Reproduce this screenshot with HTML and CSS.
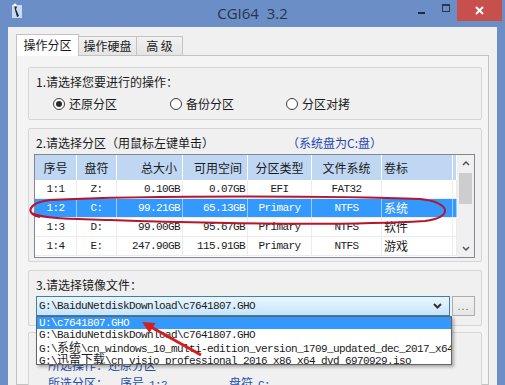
FILE: index.html
```html
<!DOCTYPE html>
<html lang="zh-CN">
<head>
    <meta charset="UTF-8">
    <title>CGI64 3.2</title>
    <link rel="stylesheet" href="styles.css">
</head>
<body>
    <div class="window">
        <header class="titlebar">
            <svg class="app-icon" width="10" height="16" viewBox="0 0 10 16">
                <rect x="0" y="2" width="10" height="13" fill="#c9dbf2"/>
                <path d="M2 1 L5 4 L4 6 L7 13 L5 14 L3 7 Z" fill="#1b2233"/>
                <circle cx="3" cy="2" r="1.6" fill="#fff"/>
            </svg>
            <div class="title">CGI64  3.2</div>
            <div class="controls">
                <div class="ctl ctl-min"><span class="min-bar"></span></div>
                <div class="ctl ctl-max"><span class="max-box"></span></div>
                <div class="ctl ctl-close">
                    <svg width="9" height="9" viewBox="0 0 9 9">
                        <path d="M1 1 L8 8 M8 1 L1 8" stroke="#fff" stroke-width="2"/>
                    </svg>
                </div>
            </div>
        </header>

        <div class="client">
            <div class="tabs">
                <div class="tab active tab-1">操作分区</div>
                <div class="tab tab-2">操作硬盘</div>
                <div class="tab tab-3">高 级</div>
            </div>

            <div class="page">
                <!-- 1. operation -->
                <section class="group group-op">
                    <div class="group-label">1.请选择您要进行的操作：</div>
                    <div class="radios">
                        <label class="radio"><span class="dot checked"></span>还原分区</label>
                        <label class="radio"><span class="dot"></span>备份分区</label>
                        <label class="radio"><span class="dot"></span>分区对拷</label>
                    </div>
                </section>

                <!-- 2. partition list -->
                <section class="group group-part">
                    <div class="group-label label-row">
                        <span class="label-main">2.请选择分区（用鼠标左键单击）</span>
                        <span class="label-note">（系统盘为C:盘）</span>
                    </div>
                    <div class="listview">
                        <div class="lv-body">
                            <div class="lv-head">
                                <div class="c">序号</div>
                                <div class="c">盘符</div>
                                <div class="r">总大小</div>
                                <div class="r">可用空间</div>
                                <div class="c">分区类型</div>
                                <div class="c">文件系统</div>
                                <div class="l">卷标</div>
                                <div></div>
                            </div>
                            <div class="lv-row mono">
                                <div class="c">1:1</div>
                                <div class="c">Z:</div>
                                <div class="r">0.10GB</div>
                                <div class="r">0.07GB</div>
                                <div class="c">EFI</div>
                                <div class="c">FAT32</div>
                                <div class="l"></div>
                                <div></div>
                            </div>
                            <div class="lv-row mono selected">
                                <div class="c">1:2</div>
                                <div class="c">C:</div>
                                <div class="r">99.21GB</div>
                                <div class="r">65.13GB</div>
                                <div class="c">Primary</div>
                                <div class="c">NTFS</div>
                                <div class="l cjk">系统</div>
                                <div></div>
                            </div>
                            <div class="lv-row mono">
                                <div class="c">1:3</div>
                                <div class="c">D:</div>
                                <div class="r">99.00GB</div>
                                <div class="r">95.67GB</div>
                                <div class="c">Primary</div>
                                <div class="c">NTFS</div>
                                <div class="l cjk">软件</div>
                                <div></div>
                            </div>
                            <div class="lv-row mono">
                                <div class="c">1:4</div>
                                <div class="c">E:</div>
                                <div class="r">247.90GB</div>
                                <div class="r">115.91GB</div>
                                <div class="c">Primary</div>
                                <div class="c">NTFS</div>
                                <div class="l cjk">游戏</div>
                                <div></div>
                            </div>
                        </div>
                        <div class="vscroll">
                            <div class="sb-btn">
                                <svg width="8" height="5" viewBox="0 0 8 5"><path d="M1 4 L4 1 L7 4" stroke="#555" stroke-width="1.5" fill="none"/></svg>
                            </div>
                            <div class="sb-track"><div class="sb-thumb"></div></div>
                            <div class="sb-btn">
                                <svg width="8" height="5" viewBox="0 0 8 5"><path d="M1 1 L4 4 L7 1" stroke="#555" stroke-width="1.5" fill="none"/></svg>
                            </div>
                        </div>
                    </div>
                </section>

                <!-- 3. image file -->
                <section class="group group-img">
                    <div class="group-label">3.请选择镜像文件：</div>
                    <div class="combo-row">
                        <div class="combo-wrap">
                            <div class="combo mono">
                                <span>G:\BaiduNetdiskDownload\c7641807.GHO</span>
                                <svg class="combo-arrow" width="9" height="6" viewBox="0 0 9 6"><path d="M1 1 L4.5 4.5 L8 1" stroke="#333" stroke-width="2" fill="none"/></svg>
                            </div>
                            <ul class="dropdown mono">
                                <li class="hot">U:\c7641807.GHO</li>
                                <li>G:\BaiduNetdiskDownload\c7641807.GHO</li>
                                <li>G:\<span class="cjk">系统</span>\cn_windows_10_multi-edition_version_1709_updated_dec_2017_x64_dvd_100406711.iso</li>
                                <li>G:\<span class="cjk">迅雷下载</span>\cn_visio_professional_2016_x86_x64_dvd_6970929.iso</li>
                            </ul>
                        </div>
                        <button class="browse">...</button>
                    </div>
                </section>

                <!-- 4. summary -->
                <section class="group group-sum">
                    <div class="sum-line">所选操作：还原分区</div>
                    <div class="sum-line">
                        <span>所选分区：</span><span class="gap-a">序号</span><span class="mono num">1:2</span><span class="gap-b">盘符</span><span class="mono num">C:</span>
                    </div>
                </section>
            </div>
        </div>

        <!-- hand drawn marks over the screenshot -->
        <svg class="marks" width="505" height="385" viewBox="0 0 505 385">
            <path d="M40 217 C25 214 27 203 50 200 C150 195 350 196 420 199 C452 202 453 218 425 221 C340 226 200 223 110 220 C70 219 45 219 31 213"
                  fill="none" stroke="#b8142c" stroke-width="2"/>
            <line x1="201" y1="355" x2="151" y2="327" stroke="#d41f1f" stroke-width="3"/>
            <polygon points="142,322 155.5,323 149.5,333" fill="#d41f1f"/>
        </svg>
    </div>
</body>
</html>
```

FILE: styles.css
```css
* {
    margin: 0;
    padding: 0;
    box-sizing: border-box;
}

body {
    font-family: "Noto Sans CJK SC", "Noto Sans", sans-serif;
    font-size: 12px;
    color: #1a1a1a;
    background: #6b8ec6;
    overflow: hidden;
}

.window {
    position: relative;
    width: 505px;
    height: 385px;
    background: #6b8ec6;
    overflow: hidden;
}

/* title bar */
.titlebar {
    height: 27px;
    display: grid;
    grid-template-columns: 1fr auto 1fr;
}

.app-icon {
    margin: 3px 0 0 12px;
}

.title {
    font-family: "Open Sans", "Noto Sans", sans-serif;
    font-size: 15px;
    line-height: 27px;
    color: #27344c;
    white-space: pre;
}

.controls {
    justify-self: end;
    display: flex;
    align-items: flex-start;
    margin-right: 3px;
}

.ctl {
    height: 21px;
    display: flex;
    justify-content: center;
}

.ctl-min {
    width: 26px;
    padding-top: 12px;
}

.min-bar {
    width: 7px;
    height: 2px;
    background: #1e2a40;
}

.ctl-max {
    width: 23px;
    padding-top: 4px;
}

.max-box {
    width: 8px;
    height: 8px;
    border: 1px solid #2a3650;
    border-top-width: 2px;
}

.ctl-close {
    width: 45px;
    align-items: center;
    background: #c7504c;
}

/* client area */
.client {
    margin: 0 8px;
    height: 358px;
    background: #f0f0f0;
    padding: 7px 8px 0;
}

.tabs {
    display: flex;
    align-items: flex-end;
    height: 21px;
    padding-left: 1px;
    position: relative;
    z-index: 1;
}

.tab {
    height: 19px;
    line-height: 18px;
    text-align: center;
    border: 1px solid #c3c3c3;
    border-bottom: none;
    background: linear-gradient(#f2f2f2, #e4e4e4);
    white-space: pre;
    margin-left: -1px;
}

.tab.active {
    height: 22px;
    line-height: 20px;
    margin-bottom: -1px;
    background: #fff;
}

.tab-1 { width: 63px; }
.tab-2 { width: 59px; }
.tab-3 { width: 47px; }

.page {
    height: 330px;
    border: 1px solid #c3c3c3;
    background: #f4f4f4;
    padding: 11px 6px 0 11px;
}

/* group boxes */
.group {
    border: 1px solid #d6d6d6;
    border-radius: 2px;
    background: #f0f0f0;
    padding: 6px 6px 0 7px;
}

.group + .group {
    margin-top: 8px;
}

.group-label {
    line-height: 16px;
    height: 16px;
}

.group-op {
    height: 53px;
}

.radios {
    display: grid;
    grid-template-columns: 117px 116px 116px;
    margin-top: 6px;
    padding-left: 17px;
}

.radio {
    display: flex;
    align-items: center;
    gap: 4px;
    line-height: 16px;
}

.dot {
    width: 12px;
    height: 12px;
    border: 1px solid #3a3a3a;
    border-radius: 50%;
    background: #fff;
    display: flex;
    align-items: center;
    justify-content: center;
}

.dot.checked::after {
    content: "";
    width: 6px;
    height: 6px;
    border-radius: 50%;
    background: #2a2a2a;
}

/* partition list */
.group-part {
    height: 134px;
    padding-left: 5px;
}

.label-row {
    display: flex;
    padding-left: 2px;
}

.label-main {
    width: 251px;
}

.label-note {
    color: #1c46b4;
}

.listview {
    margin-top: 3px;
    width: 441px;
    height: 104px;
    border: 1px solid #828790;
    background: #fff;
    display: flex;
}

.lv-body {
    width: 422px;
}

.lv-head,
.lv-row {
    display: grid;
    grid-template-columns: 42px 40px 66px 65px 64px 70px 71px 1fr;
    white-space: nowrap;
}

.lv-head {
    height: 25px;
    line-height: 25px;
    background: #bfd7f2;
}

.lv-head > div {
    border-right: 1px solid #fff;
}

.lv-head .r { padding-right: 5px; }

.lv-row {
    height: 19px;
    line-height: 18px;
    border-bottom: 1px solid #ececec;
}

.lv-row > div {
    border-right: 1px solid #ececec;
    overflow: hidden;
}

.lv-row .r { padding-right: 2px; }

.lv-row.selected {
    background: #3399ff;
    color: #fff;
}

.lv-row.selected > div {
    border-right-color: #9ccbff;
}

.c { text-align: center; }
.r { text-align: right; }
.l { text-align: left; padding-left: 2px; }

.vscroll {
    width: 17px;
    background: #f0f0f0;
    display: flex;
    flex-direction: column;
}

.sb-btn {
    height: 17px;
    display: flex;
    align-items: center;
    justify-content: center;
}

.sb-track {
    flex: 1;
    padding: 1px 2px 0;
}

.sb-thumb {
    height: 31px;
    background: #cdcdcd;
}

/* monospace text, SimSun-like widths */
.mono {
    font-family: "Liberation Mono", "DejaVu Sans Mono", monospace;
    font-size: 11px;
    letter-spacing: -0.6px;
}

.cjk {
    font-family: "Noto Sans CJK SC", sans-serif;
    font-size: 12px;
    letter-spacing: 0;
}

/* image file */
.group-img {
    height: 56px;
}

.combo-row {
    display: flex;
    margin-top: 3px;
}

.combo-wrap {
    position: relative;
    width: 416px;
}

.combo {
    height: 20px;
    line-height: 18px;
    padding: 0 2px;
    border: 1px solid #3c7fb1;
    background: linear-gradient(#eaf5fd, #d9eefc 50%, #c6e4fa);
    display: flex;
    justify-content: space-between;
    align-items: center;
    white-space: nowrap;
}

.combo-arrow {
    margin-right: 5px;
}

.dropdown {
    position: absolute;
    top: 20px;
    left: 0;
    width: 416px;
    height: 49px;
    list-style: none;
    background: #fff;
    border: 1px solid #646464;
    box-shadow: 2px 2px 3px rgba(0, 0, 0, 0.3);
    overflow: hidden;
    z-index: 5;
}

.dropdown li {
    height: 12px;
    line-height: 12px;
    padding-left: 2px;
    white-space: nowrap;
}

.dropdown li.hot {
    background: #3399ff;
    color: #fff;
}

.browse {
    margin-left: 2px;
    width: 23px;
    height: 20px;
    border: 1px solid #adadad;
    background: linear-gradient(#f2f2f2, #e6e6e6);
    color: #666;
    font-family: "Liberation Sans", sans-serif;
    font-size: 11px;
    letter-spacing: 1px;
}

/* summary */
.group-sum {
    margin-top: 6px !important;
    height: 70px;
    padding: 23px 6px 0 19px;
    color: #1f4fa8;
}

.sum-line {
    line-height: 18px;
    white-space: nowrap;
}

.gap-a { margin-left: 12px; }
.gap-b { margin-left: 62px; }
.num { margin-left: 5px; }

/* red marks drawn over the capture */
.marks {
    position: absolute;
    left: 0;
    top: 0;
    pointer-events: none;
    z-index: 10;
}
```
